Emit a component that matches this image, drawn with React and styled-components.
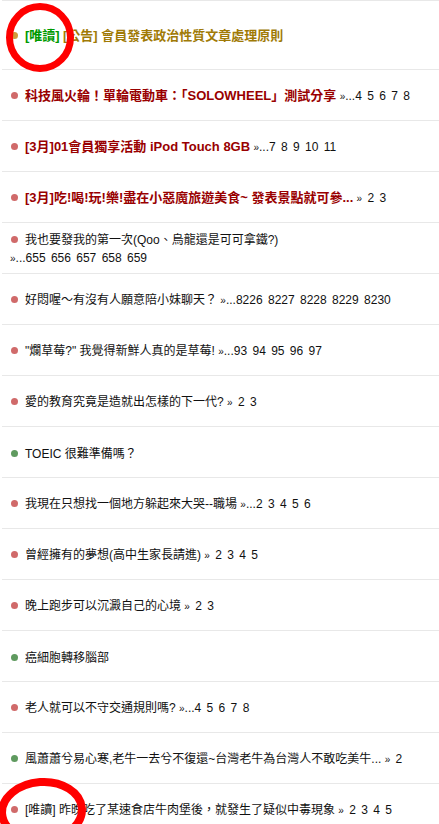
import React from "react";
import styled, { createGlobalStyle } from "styled-components";

const topics = [
  { dot: "red", bold: true, title: "科技風火輪！單輪電動車：「SOLOWHEEL」測試分享", pages: "...4 5 6 7 8" },
  { dot: "red", bold: true, title: "[3月]01會員獨享活動 iPod Touch 8GB", pages: "...7 8 9 10 11" },
  { dot: "red", bold: true, title: "[3月]吃!喝!玩!樂!盡在小惡魔旅遊美食~ 發表景點就可參...", pages: " 2 3" },
  { dot: "red", title: "我也要發我的第一次(Qoo、烏龍還是可可拿鐵?)", pages: "...655 656 657 658 659" },
  { dot: "red", title: "好悶喔～有沒有人願意陪小妹聊天？", pages: "...8226 8227 8228 8229 8230" },
  { dot: "red", title: "\"爛草莓?\" 我覺得新鮮人真的是草莓!", pages: "...93 94 95 96 97" },
  { dot: "red", title: "愛的教育究竟是造就出怎樣的下一代?", pages: " 2 3" },
  { dot: "green", title: "TOEIC 很難準備嗎？" },
  { dot: "red", title: "我現在只想找一個地方躲起來大哭--職場", pages: "...2 3 4 5 6" },
  { dot: "red", title: "曾經擁有的夢想(高中生家長請進)", pages: " 2 3 4 5" },
  { dot: "red", title: "晚上跑步可以沉澱自己的心境", pages: " 2 3" },
  { dot: "green", title: "癌細胞轉移腦部" },
  { dot: "red", title: "老人就可以不守交通規則嗎?", pages: "...4 5 6 7 8" },
  { dot: "green", title: "風蕭蕭兮易心寒,老牛一去兮不復還~台灣老牛為台灣人不敢吃美牛...", pages: " 2" },
  { dot: "red", title: "[唯讀] 昨晚吃了某速食店牛肉堡後，就發生了疑似中毒現象", pages: " 2 3 4 5" },
];

const dotColors = {
  red: "#d06a6a",
  green: "#5f9a5f",
  gold: "#d09a3a",
};

export default function App() {
  return (
    <Page>
      <GlobalStyle />
      <List>
        <Item $tall>
          <Text>
            <Dot $color={dotColors.gold} />
            <Locked>[唯讀]</Locked> <Notice>[公告] 會員發表政治性質文章處理原則</Notice>
          </Text>
        </Item>
        {topics.map((topic, index) => (
          <Item key={index}>
            <Text>
              <Dot $color={dotColors[topic.dot]} />
              <Title $bold={topic.bold}>{topic.title}</Title>
              {topic.pages && (
                <>
                  {" "}
                  <Pages>
                    <Arrow>»</Arrow>
                    {topic.pages}
                  </Pages>
                </>
              )}
            </Text>
          </Item>
        ))}
      </List>

      <Mark width="80" height="80" viewBox="0 0 80 80" style={{ left: 0, top: 0 }}>
        <ellipse cx="40" cy="37.5" rx="30.5" ry="31" fill="none" stroke="#ff0000" strokeWidth="7" />
      </Mark>
      <Mark width="100" height="70" viewBox="0 0 100 70" style={{ left: -6, top: 774 }}>
        <ellipse
          cx="48"
          cy="37"
          rx="40"
          ry="29"
          fill="none"
          stroke="#ff0000"
          strokeWidth="8"
          transform="rotate(-4 48 37)"
        />
      </Mark>
    </Page>
  );
}

const GlobalStyle = createGlobalStyle`
  body {
    margin: 0;
    background: #fff;
    font-family: "Liberation Sans", "Noto Sans CJK TC", sans-serif;
  }
`;

const Page = styled.div`
  position: relative;
  width: 439px;
  height: 824px;
  overflow: hidden;
  background: #fff;
`;

const List = styled.div`
  margin-left: 2px;
  border-top: 1px solid #e8e8e8;
`;

const Item = styled.div`
  box-sizing: border-box;
  height: ${(p) => (p.$tall ? "69px" : "51px")};
  display: flex;
  align-items: center;
  padding: ${(p) => (p.$tall ? "2px" : "3px")} 25px 0 8px;
  border-bottom: 1px solid #e8e8e8;
`;

const Text = styled.div`
  font-size: 12px;
  line-height: 18px;
  color: #111;
`;

const Dot = styled.span`
  display: inline-block;
  width: 7px;
  height: 7px;
  border-radius: 50%;
  background: ${(p) => p.$color};
  margin: 0 7px 0 1px;
  vertical-align: 1px;
`;

const Title = styled.span`
  font-size: ${(p) => (p.$bold ? "13px" : "12px")};
  font-weight: ${(p) => (p.$bold ? "bold" : "normal")};
  color: ${(p) => (p.$bold ? "#990000" : "#111")};
`;

const Locked = styled.span`
  font-size: 13px;
  font-weight: bold;
  color: #009a00;
`;

const Notice = styled.span`
  font-size: 13px;
  font-weight: bold;
  color: #a07a06;
`;

const Pages = styled.span`
  display: inline-block;
  white-space: pre;
  font-size: 12px;
  word-spacing: 2px;
  color: #111;
`;

const Arrow = styled.span`
  font-size: 10px;
`;

const Mark = styled.svg`
  position: absolute;
  pointer-events: none;
`;
